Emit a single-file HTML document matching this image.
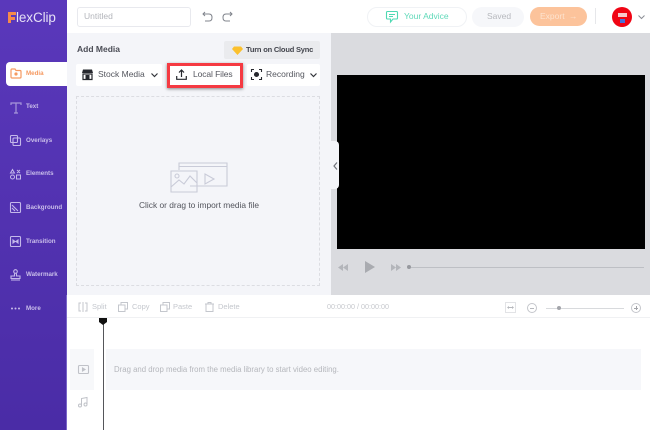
<!DOCTYPE html>
<html><head><meta charset="utf-8">
<style>
*{box-sizing:border-box}
html,body{margin:0;padding:0;width:650px;height:430px;overflow:hidden;background:#fff;font-family:"Liberation Sans",sans-serif}
.a{position:absolute}
.t{position:absolute;white-space:nowrap;line-height:1}
svg{position:absolute;overflow:visible}
.nav{font-size:6.2px;color:#c9bdea;font-weight:bold}
.btn{position:absolute;background:#fff;height:22px;top:64px;border-radius:2px}
.tool{font-size:7.5px;color:#c4c7cd}
</style></head><body>
<div class="a" style="left:0;top:0;width:650px;height:430px;overflow:hidden">
<!-- sidebar -->
<div class="a" style="left:0;top:0;width:67px;height:430px;background:linear-gradient(180deg,#5a38bb,#4a2ca6)"></div>
<svg style="left:7px;top:11px" width="10" height="13"><path d="M1 1H9V4H4V6H8V9H4V12H1Z" fill="#f58a4b"/></svg>
<div class="t" style="left:16px;top:11px;font-size:13.500px;color:#e6e0f6;letter-spacing:-.1px">lexClip</div>
<div class="a" style="left:6px;top:62px;width:61px;height:24px;background:#fff;border-radius:4px 0 0 4px"></div>
<svg style="left:10px;top:68px" width="12" height="11" fill="none" stroke="#f59a62" stroke-width="1.2"><path d="M1 2.500Q1 1 2 1H5L6 2.500H10Q11 2.500 11 3.500V9Q11 10 10 10H2Q1 10 1 9Z"/><circle cx="6" cy="6" r="1" fill="#f59a62"/></svg>
<div class="t nav" style="left:26px;top:71px;color:#f59a62">Media</div>
<svg style="left:10px;top:102px" width="12" height="12" fill="none" stroke="#a796da" stroke-width="1.2"><path d="M1 3V1H11V3M6 1V11M4 11H8"/></svg>
<div class="t nav" style="left:26px;top:104px">Text</div>
<svg style="left:10px;top:135px" width="11" height="11" fill="none" stroke="#c4b8ea" stroke-width="1.1"><rect x=".5" y=".5" width="7" height="7" rx="1"/><rect x="3" y="3" width="7.500" height="7.500" rx="1"/></svg>
<div class="t nav" style="left:26px;top:138px">Overlays</div>
<svg style="left:10px;top:169px" width="11" height="11" fill="none" stroke="#c4b8ea" stroke-width="1"><path d="M2.500 .5L4.500 4H.5ZM7 1L10 4M10 1L7 4"/><circle cx="2.500" cy="8" r="2"/><rect x="6.500" y="6" width="4" height="4"/></svg>
<div class="t nav" style="left:26px;top:171px">Elements</div>
<svg style="left:10px;top:202px" width="11" height="11" fill="none" stroke="#c4b8ea" stroke-width="1.1"><rect x=".5" y=".5" width="10" height="10" rx="1"/><path d="M2 3L8 9M2 6L5 9"/></svg>
<div class="t nav" style="left:26px;top:205px">Background</div>
<svg style="left:10px;top:236px" width="11" height="11" fill="none" stroke="#c4b8ea" stroke-width="1.1"><rect x=".5" y=".5" width="10" height="10" rx="1"/><path d="M3 4V7L5 5.500ZM8 4V7L6 5.500Z" fill="#c4b8ea"/></svg>
<div class="t nav" style="left:26px;top:239px">Transition</div>
<svg style="left:10px;top:269px" width="11" height="12" fill="none" stroke="#c4b8ea" stroke-width="1.1"><circle cx="5.500" cy="2.500" r="1.800"/><path d="M4.500 4.500V7H1V9.500H10V7H6.500V4.500M1 11H10"/></svg>
<div class="t nav" style="left:26px;top:272px">Watermark</div>
<svg style="left:11px;top:307px" width="10" height="3" fill="#c9bdea"><circle cx="1" cy="1.500" r="1"/><circle cx="4.500" cy="1.500" r="1"/><circle cx="8" cy="1.500" r="1"/></svg>
<div class="t nav" style="left:26px;top:306px">More</div>
<!-- top bar -->
<div class="a" style="left:67px;top:0;width:583px;height:33px;background:#fff"></div>
<div class="a" style="left:77px;top:7px;width:114px;height:20px;border:1px solid #e8e9ee;border-radius:3px"></div>
<div class="t" style="left:84px;top:12px;font-size:8.500px;color:#b3b5bb">Untitled</div>
<svg style="left:202px;top:11px" width="11" height="11" fill="none" stroke="#80848c" stroke-width="1"><path d="M3 1L1 3L3 5M1 3H7Q10 3 10 6.500Q10 10 7 10H3"/></svg>
<svg style="left:222px;top:11px" width="11" height="11" fill="none" stroke="#80848c" stroke-width="1"><path d="M8 1L10 3L8 5M10 3H4Q1 3 1 6.500Q1 10 4 10H8"/></svg>
<div class="a" style="left:367px;top:7px;width:100px;height:20px;border:1px solid #f0f2f5;border-radius:10px"></div>
<svg style="left:386px;top:11px" width="12" height="12" fill="none" stroke="#4ed9b3" stroke-width="1.1"><path d="M1.500 .5H10.500Q11.500 .5 11.500 1.500V7Q11.500 8 10.500 8H7L4.500 11V8H1.500Q.5 8 .5 7V1.500Q.5 .5 1.500 .5ZM3 3.500H9M3 5.500H7"/></svg>
<div class="t" style="left:404px;top:12px;font-size:8.500px;color:#5fd9b9">Your Advice</div>
<div class="a" style="left:472px;top:7px;width:52px;height:20px;background:#f6f7fa;border-radius:10px"></div>
<div class="t" style="left:487px;top:12px;font-size:8.500px;color:#b6b8bd">Saved</div>
<div class="a" style="left:530px;top:7px;width:57px;height:19px;background:#fcc39b;border-radius:10px"></div>
<div class="t" style="left:540px;top:12px;font-size:8.500px;color:#fde3cf">Export</div>
<div class="t" style="left:569px;top:12px;font-size:8.500px;color:#fde3cf">→</div>
<div class="a" style="left:595px;top:8px;width:1px;height:16px;background:#e6e7ea"></div>
<div class="a" style="left:612px;top:7px;width:20px;height:20px;border-radius:50%;background:#f00414"></div>
<div class="a" style="left:620px;top:19px;width:5px;height:4px;background:#4a70d8"></div>
<div class="a" style="left:618px;top:13px;width:9px;height:4px;background:#f7c8cc"></div>
<svg style="left:638px;top:15px" width="7" height="5" fill="none" stroke="#8b8e95" stroke-width="1"><path d="M.5 .5L3.500 3.500L6.500 .5"/></svg>
<!-- left panel -->
<div class="a" style="left:67px;top:33px;width:264px;height:262px;background:#f4f5f9"></div>
<div class="t" style="left:77px;top:45px;font-size:8.500px;font-weight:bold;color:#4a4c55">Add Media</div>
<div class="a" style="left:224px;top:41px;width:96px;height:18px;background:#eaebee;border-radius:2px"></div>
<svg style="left:232px;top:46px" width="11" height="9"><path d="M2 .5H9L11 3L5.500 9L0 3Z" fill="#fbc02d"/></svg>
<div class="t" style="left:246px;top:46px;font-size:7.500px;font-weight:bold;color:#43454d;letter-spacing:-.2px">Turn on Cloud Sync</div>
<div class="btn" style="left:76px;width:86px"></div>
<svg style="left:82px;top:69px" width="11" height="11"><path d="M1 .5H10L11 4H0Z" fill="#26282e"/><path d="M1 5H10V10.500H1Z" fill="none" stroke="#26282e" stroke-width="1.200"/><rect x="3.500" y="6" width="4" height="4" fill="#26282e"/></svg>
<div class="t" style="left:98px;top:70px;font-size:8.500px;color:#55575f">Stock Media</div>
<svg style="left:151px;top:73px" width="7" height="5" fill="none" stroke="#33353b" stroke-width="1.200"><path d="M.5 .5L3.500 3.500L6.500 .5"/></svg>
<div class="a" style="left:167px;top:63px;width:76px;height:25px;background:#fff;border:3px solid #f53a42;box-shadow:0 1px 3px rgba(0,0,0,.45)"></div>
<svg style="left:176px;top:69px" width="11" height="11" fill="none" stroke="#26282e" stroke-width="1.200"><path d="M5.500 8V1M3 3.500L5.500 1L8 3.500M.7 7V10.300H10.300V7"/></svg>
<div class="t" style="left:193px;top:70px;font-size:8.500px;color:#55575f;letter-spacing:-.1px">Local Files</div>
<div class="btn" style="left:247px;width:73px"></div>
<svg style="left:251px;top:69px" width="11" height="11" fill="none" stroke="#26282e" stroke-width="1.100"><path d="M.5 3V.5H3M8 .5H10.500V3M10.500 8V10.500H8M3 10.500H.5V8"/><circle cx="5.500" cy="5.500" r="2" fill="#26282e"/></svg>
<div class="t" style="left:266px;top:70px;font-size:8.500px;color:#55575f">Recording</div>
<svg style="left:310px;top:73px" width="7" height="5" fill="none" stroke="#33353b" stroke-width="1.200"><path d="M.5 .5L3.500 3.500L6.500 .5"/></svg>
<div class="a" style="left:76px;top:96px;width:244px;height:190px;border:1px dashed #dcdde2"></div>
<svg style="left:170px;top:162px" width="58" height="32" fill="none" stroke="#c9cbd8" stroke-width="1.100"><path d="M9 8V1H57V24H20M9 4.500H57"/><path d="M1 9H27V30H1ZM1 25L9 18L14 22L20 14L27 21"/><circle cx="7" cy="14" r="2"/><path d="M35 12L44 17L35 22Z"/></svg>
<div class="t" style="left:139px;top:201px;font-size:8.400px;color:#53555d">Click or drag to import media file</div>
<!-- preview -->
<div class="a" style="left:331px;top:33px;width:319px;height:262px;background:#dadbdf"></div>
<div class="a" style="left:337px;top:75px;width:308px;height:174px;background:#000"></div>
<div class="a" style="left:331px;top:141px;width:8px;height:48px;background:#f4f5f9;border-radius:0 4px 4px 0"></div>
<svg style="left:333px;top:162px" width="5" height="8" fill="none" stroke="#70737b" stroke-width="1.200"><path d="M4 .5L1 4L4 7.500"/></svg>
<svg style="left:338px;top:264px" width="10" height="7" fill="#b3b5ba"><path d="M5 0V7L0 3.500ZM10 0V7L5 3.500Z"/></svg>
<svg style="left:365px;top:261px" width="10" height="12" fill="#a9abb0"><path d="M0 0L10 6L0 12Z"/></svg>
<svg style="left:391px;top:264px" width="10" height="7" fill="#b3b5ba"><path d="M0 0L5 3.500L0 7ZM5 0L10 3.500L5 7Z"/></svg>
<div class="a" style="left:407px;top:265px;width:4px;height:4px;border-radius:50%;background:#97999f"></div>
<div class="a" style="left:411px;top:267px;width:233px;height:1px;background:#bdbfc4"></div>
<!-- timeline -->
<div class="a" style="left:67px;top:295px;width:583px;height:135px;background:#fff"></div>
<div class="a" style="left:67px;top:317px;width:583px;height:1px;background:#f0f1f3"></div>
<svg style="left:78px;top:302px" width="10" height="10" fill="none" stroke="#c4c7cd"><path d="M3 1H1V9H3M7 1H9V9H7M5 0V10"/></svg>
<div class="t tool" style="left:92px;top:303px">Split</div>
<svg style="left:118px;top:302px" width="10" height="10" fill="none" stroke="#c4c7cd"><path d="M3 2.500V.5H9.500V7H7.500M.5 3H7V9.500H.5Z"/></svg>
<div class="t tool" style="left:132px;top:303px">Copy</div>
<svg style="left:160px;top:302px" width="10" height="10" fill="none" stroke="#c4c7cd"><path d="M3 2.500V.5H9.500V7H7.500M.5 3H7V9.500H.5Z"/></svg>
<div class="t tool" style="left:173px;top:303px">Paste</div>
<svg style="left:205px;top:302px" width="9" height="10" fill="none" stroke="#c4c7cd"><path d="M0 2H9M3 2V.5H6V2M1 2V9.500H8V2"/></svg>
<div class="t tool" style="left:218px;top:303px">Delete</div>
<div class="t" style="left:327px;top:303px;font-size:7.200px;color:#c6c8cd">00:00:00 / 00:00:00</div>
<div class="a" style="left:505px;top:302px;width:11px;height:11px;border:1px solid #e2e3e6"></div>
<svg style="left:507px;top:306px" width="7" height="3" fill="#b6b8bd"><path d="M0 1.500L2 0V3ZM7 1.500L5 0V3ZM2 1H5V2H2Z"/></svg>
<div class="a" style="left:527px;top:303px;width:10px;height:10px;border:1px solid #c4c6cb;border-radius:50%"></div>
<div class="a" style="left:530px;top:307.500px;width:4px;height:1px;background:#b6b8bd"></div>
<div class="a" style="left:546px;top:308px;width:78px;height:1px;background:#d8dadd"></div>
<div class="a" style="left:557px;top:306px;width:4px;height:4px;border-radius:50%;background:#a3a5aa"></div>
<div class="a" style="left:631px;top:303px;width:10px;height:10px;border:1px solid #c4c6cb;border-radius:50%"></div>
<div class="a" style="left:634px;top:307.500px;width:4px;height:1px;background:#a3a5aa"></div>
<div class="a" style="left:635.500px;top:306px;width:1px;height:4px;background:#a3a5aa"></div>
<div class="a" style="left:70px;top:349px;width:24px;height:41px;background:#f7f8fa"></div>
<div class="a" style="left:106px;top:349px;width:535px;height:41px;background:#f6f7fa"></div>
<svg style="left:78px;top:365px" width="11" height="9" fill="none" stroke="#c0c2c8" stroke-width="1.100"><rect x=".5" y=".5" width="10" height="8" rx="1"/><path d="M4.500 3L7 4.500L4.500 6Z" fill="#c0c2c8"/></svg>
<svg style="left:78px;top:397px" width="10" height="11" fill="none" stroke="#c0c2c8"><path d="M3.500 8V1.500L9 .5V7"/><circle cx="2" cy="8.500" r="1.500"/><circle cx="7.500" cy="7.500" r="1.500"/></svg>
<div class="t" style="left:114px;top:366px;font-size:7.800px;color:#b5b7bc">Drag and drop media from the media library to start video editing.</div>
<div class="a" style="left:102.500px;top:322px;width:1.500px;height:108px;background:#55565a"></div>
<svg style="left:99px;top:318px" width="8" height="7" fill="#111"><path d="M0 0H8V4L4 7L0 4Z"/></svg>
<div class="a" style="left:66px;top:295px;width:1px;height:135px;background:#7a66c8"></div>
</div>
</body></html>
